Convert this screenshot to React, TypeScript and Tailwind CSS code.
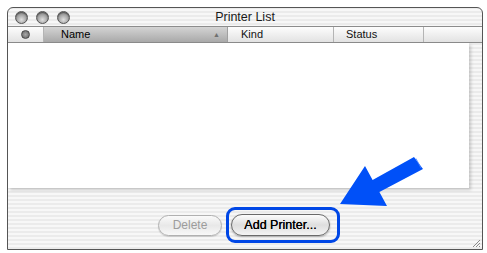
import React from "react";

const stripes =
  "bg-[repeating-linear-gradient(0deg,#ebebeb_0px,#ebebeb_2px,#f7f7f7_2px,#f7f7f7_4px)]";

function Light() {
  return (
    <div className="h-[13px] w-[13px] rounded-full border border-[#555] bg-[radial-gradient(circle_at_50%_70%,#e0e0e0_0%,#a0a0a0_55%,#707070_100%)] shadow-[inset_0_1px_1px_rgba(0,0,0,0.4)]" />
  );
}

function Arrow() {
  return (
    <svg
      className="pointer-events-none absolute left-0 top-0"
      width="487"
      height="253"
      viewBox="0 0 487 253"
    >
      <polygon
        points="340,204 365,166 372.6,179.9 414,157 423,169 379.4,192.1 387,206"
        fill="#0050f8"
      />
      <line x1="416" y1="158.5" x2="421" y2="168" stroke="#4d86ff" strokeWidth="0.8" />
    </svg>
  );
}

export default function App() {
  return (
    <div className="relative h-[253px] w-[487px] overflow-hidden bg-white pl-[7px] pt-[7px] font-['Liberation_Sans',Arial,sans-serif]">
      <div className={`flex h-[243px] w-[476px] flex-col overflow-hidden rounded-t-[6px] border border-[#555] ${stripes}`}>
        {/* Title bar */}
        <div className="relative flex h-[19px] shrink-0 items-center border-b border-[#8c8c8c]">
          <div className="flex items-center gap-[8px] pl-[7px] pt-[1px]">
            <Light />
            <Light />
            <Light />
          </div>
          <div className="absolute inset-x-0 top-[1px] text-center text-[12.5px] leading-[17px] text-[#1a1a1a]">
            Printer List
          </div>
        </div>

        {/* Column headers */}
        <div className="flex h-[16px] shrink-0 border-b border-[#8c8c8c] text-[11px] leading-[15px] text-[#111]">
          <div className="flex w-[36px] items-center justify-center border-r border-[#b4b4b4] bg-gradient-to-b from-[#fdfdfd] to-[#e2e2e2]">
            <div className="h-[9px] w-[9px] rounded-full border border-[#4a4a4a] bg-[radial-gradient(circle,#aaa_0%,#5e5e5e_100%)]" />
          </div>
          <div className="relative flex w-[184px] items-center border-r border-[#a0a0a0] bg-gradient-to-b from-[#d4d4d4] to-[#a9a9a9] pl-[17px] text-black">
            Name
            <span className="absolute right-[7px] top-[4px] text-[7px] leading-[7px] text-[#6f6f6f]">▲</span>
          </div>
          <div className="flex w-[106px] items-center border-r border-[#b4b4b4] bg-gradient-to-b from-[#fdfdfd] to-[#e2e2e2] pl-[13px]">
            Kind
          </div>
          <div className="flex w-[90px] items-center border-r border-[#b4b4b4] bg-gradient-to-b from-[#fdfdfd] to-[#e2e2e2] pl-[12px]">
            Status
          </div>
          <div className="flex-1 bg-gradient-to-b from-[#fdfdfd] to-[#e2e2e2]" />
        </div>

        {/* List */}
        <div className="flex h-[145px] shrink-0">
          <div className="flex-1 bg-white shadow-[2px_2px_3px_rgba(0,0,0,0.18)]" />
          <div className="w-[13px]" />
        </div>

        {/* Buttons */}
        <div className="relative flex flex-1 items-start pl-[150px] pt-[19px]">
          <div className="flex h-[36px] items-center gap-[4px]">
            <button className="h-[21px] w-[64px] rounded-full border border-[#b0b0b0] bg-gradient-to-b from-[#fafafa] via-[#e8e8e8] to-[#f8f8f8] text-[12px] leading-[19px] text-[#9c9c9c] shadow-[0_1px_1px_rgba(0,0,0,0.15)]">
              Delete
            </button>
            <div className="flex h-[36px] w-[114px] items-center rounded-[9px] border-[3px] border-[#0047e6] pl-[2px]">
              <button className="h-[22px] w-[99px] rounded-full border border-[#6a6a6a] bg-gradient-to-b from-[#fdfdfd] via-[#dedede] to-[#f4f4f4] text-[12.5px] leading-[20px] text-black shadow-[0_1px_2px_rgba(0,0,0,0.3)] [text-shadow:0_0_0.4px_#000]">
                Add Printer...
              </button>
            </div>
          </div>
          <svg className="absolute bottom-[1px] right-[1px]" width="10" height="10" viewBox="0 0 10 10">
            <path d="M9 2 L2 9 M9 5 L5 9 M9 8 L8 9" stroke="#8a8a8a" strokeWidth="1" />
          </svg>
        </div>
      </div>
      <Arrow />
    </div>
  );
}
